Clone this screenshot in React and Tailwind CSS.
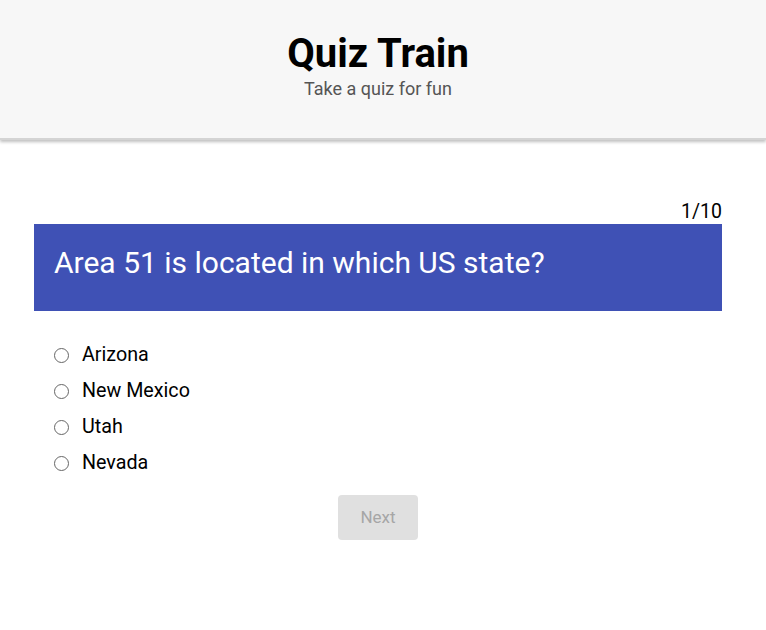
export default function App() {
  const options = ['Arizona', 'New Mexico', 'Utah', 'Nevada']
  return (
    <div className="min-h-screen bg-white" style={{ fontFamily: 'Roboto, sans-serif' }}>
      {/* Header */}
      <div className="h-[140px] bg-[#f7f7f7] shadow-[0_2px_3px_rgba(0,0,0,0.25)] border-b-2 border-[#d4d4d4] flex flex-col items-center pt-[30px] pr-[10px]">
        <h1 className="text-[40px] font-bold leading-[48px] text-black">Quiz Train</h1>
        <p className="text-[18px] leading-[22px] text-[#555]">Take a quiz for fun</p>
      </div>

      <div className="w-[688px] ml-[34px] mt-[60px]">
        <div className="text-right text-[19.5px] leading-[24px] text-black">1/10</div>
        <div className="bg-[#3f51b5] h-[87px] flex items-center px-[20px] pb-[10px]">
          <h2 className="text-[30px] text-white">Area 51 is located in which US state?</h2>
        </div>

        <div className="mt-[26px] flex flex-col px-[20px]">
          {options.map((o) => (
            <label key={o} className="flex items-center h-[36px] gap-[13px]">
              <span className="w-[15px] h-[15px] rounded-full border-[1.5px] border-[#666] bg-white"></span>
              <span className="text-[19.7px] text-black">{o}</span>
            </label>
          ))}
        </div>

        <div className="flex justify-center mt-[14px]">
          <button className="w-[80px] h-[45px] rounded-[4px] bg-[#e0e0e0] text-[#a6a6a6] text-[17px]">Next</button>
        </div>
      </div>
    </div>
  )
}
